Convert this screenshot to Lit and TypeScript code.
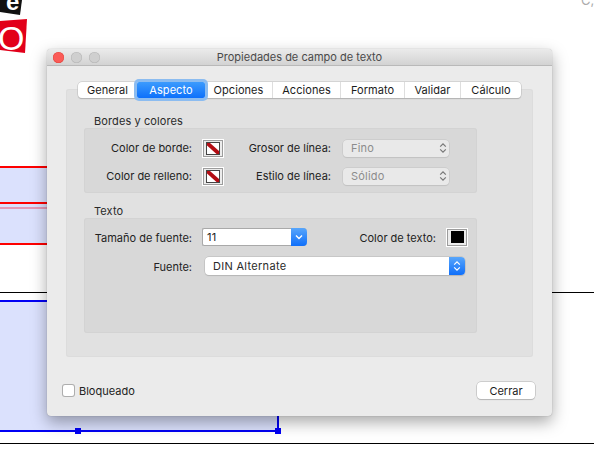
import { LitElement, html, css, svg } from "lit";
import { customElement } from "lit/decorators.js";

const updown = svg`<svg class="ud" viewBox="0 0 8 12" width="8" height="12"><path d="M1.2 4.6 4 1.8l2.8 2.8M1.2 7.4 4 10.2l2.8-2.8" fill="none" stroke="currentColor" stroke-width="1.2"/></svg>`;
const noColor = svg`<svg viewBox="0 0 14 13" width="14" height="13"><rect width="14" height="13" fill="#fff"/><path d="M1 1h3L13 9v3h-2.500L1 3.500z" fill="#b30d14"/><rect x=".5" y=".5" width="13" height="12" fill="none" stroke="#444"/></svg>`;

@customElement("app-root")
export class AppRoot extends LitElement {
  static styles = css`
    :host {
      display: block;
      position: relative;
      width: 594px;
      height: 464px;
      overflow: hidden;
      background: #fff;
      font-family: Inter, "Liberation Sans", sans-serif;
      font-size: 11px;
      color: #222;
    }
    .c { position: absolute; }
    .black { background: #000; height: 1px; }
    .red { background: #fe0000; height: 2px; left: 0; width: 60px; }
    .fill { background: #dbe1fd; }
    .blue { background: #0000f5; }
    .handle { background: #0000f5; width: 6px; height: 6px; }
    .logo { left: 0; top: 0; }
    .corner { left: 581px; top: -8px; color: #aaa; font-size: 13px; }

    .win {
      position: absolute;
      left: 47px;
      top: 49px;
      width: 505px;
      height: 367px;
      box-sizing: border-box;
      display: flex;
      flex-direction: column;
      background: #ebebeb;
      border-radius: 4px;
      box-shadow: 0 0 1px rgba(0,0,0,.35), 0 6px 16px rgba(0,0,0,.35);
    }
    .title {
      height: 16px;
      flex: none;
      display: flex;
      align-items: center;
      justify-content: center;
      position: relative;
      border-bottom: 1px solid #b9b9b9;
      border-radius: 4px 4px 0 0;
      background: linear-gradient(#ebebeb, #d3d3d3);
      color: #4a4a4a;
    }
    .lights { position: absolute; left: 6px; top: 3px; display: flex; gap: 7px; }
    .lights i { width: 11px; height: 11px; border-radius: 50%; background: #cfcfcf; box-shadow: inset 0 0 0 .5px #b5b5b5; }
    .lights i:first-child { background: #fb5b57; box-shadow: inset 0 0 0 .5px #e2463f; }

    .panel {
      margin: 23px 19px 0;
      height: 268px;
      flex: none;
      box-sizing: border-box;
      padding: 0 56px 0 18px;
      background: #e1e1e1;
      border-radius: 3px;
      box-shadow: inset 0 0 0 1px #dcdcdc;
      display: flex;
      flex-direction: column;
    }
    .tabs {
      margin: -7px 0 0 -6px;
      height: 16px;
      flex: none;
      display: flex;
      width: 443px;
      background: #fff;
      border-radius: 4px;
      box-shadow: 0 0 0 .5px #bdbdbd, 0 1px 1px rgba(0,0,0,.25);
      color: #1c1c1c;
      letter-spacing: .05px;
    }
    .tab {
      display: flex;
      align-items: center;
      justify-content: center;
      border-left: 1px solid #dedede;
      box-sizing: border-box;
    }
    .tab:first-child { border-left: 0; }
    .tab.on {
      position: relative;
      z-index: 1;
      border: 0;
      color: #fff;
      background: linear-gradient(#3c9bfd, #0d70fb);
      box-shadow: 0 0 0 3px #8cbcf0;
      border-radius: 2px;
    }
    .tab.on + .tab { border-left: 0; }

    .head { margin: 11px 0 0 10px; height: 14px; line-height: 14px; color: #2a2a2a; letter-spacing: .1px; }
    .head.first { margin-top: 16px; }
    .group { background: #d8d8d8; border-radius: 3px; box-shadow: inset 0 0 0 1px #d3d3d3; box-sizing: border-box; }
    .g1 {
      height: 65px;
      display: grid;
      grid-template-columns: 108px 32px 107px 118px;
      grid-auto-rows: 28px;
      align-items: center;
      padding-top: 6px;
    }
    .lbl { text-align: right; white-space: nowrap; color: #222; }
    .swatch {
      width: 22px;
      height: 19px;
      box-sizing: border-box;
      margin-left: 10px;
      background: #ececec;
      border: 1px solid #fff;
      box-shadow: inset 0 0 0 1px #9c9c9c;
      display: flex;
      align-items: center;
      justify-content: center;
    }
    .dis {
      margin-left: 12px;
      width: 106px;
      height: 17px;
      box-sizing: border-box;
      background: #e9e9e9;
      border-radius: 4px;
      box-shadow: 0 0 0 .5px #c2c2c2, 0 1px 1px rgba(0,0,0,.1);
      color: #8c8c8c;
      display: flex;
      align-items: center;
      justify-content: space-between;
      padding: 0 2px 0 8px;
      letter-spacing: .2px;
    }
    .dis .ud { color: #777; }
    .g2 {
      height: 115px;
      padding-top: 10px;
      display: flex;
      flex-direction: column;
      gap: 11px;
    }
    .row { display: flex; align-items: center; height: 18px; }
    .row .lbl { width: 108px; flex: none; padding-top: 2px; }
    .combo {
      margin-left: 10px;
      width: 105px;
      height: 18px;
      box-sizing: border-box;
      display: flex;
      background: #fff;
      border: 1px solid #a9a9a9;
      border-right: 0;
      border-radius: 2px 4px 4px 2px;
      align-items: stretch;
      justify-content: space-between;
      color: #222;
      letter-spacing: .3px;
    }
    .combo span { padding-left: 4px; line-height: 16px; }
    .arrow {
      width: 16px;
      margin: -1px 0;
      display: flex;
      align-items: center;
      justify-content: center;
      color: #fff;
      background: linear-gradient(#58a6fb, #0f6ffa);
      border-radius: 0 4px 4px 0;
    }
    .popup .arrow { margin: 0; }
    .spacer { flex: 1; }
    .row .lbl.wide { width: auto; }
    .row .swatch.k { margin: 0 9px 0 10px; }
    .k i { width: 13px; height: 12px; background: #000; display: block; }
    .popup {
      margin-left: 13px;
      width: 260px;
      height: 18px;
      box-sizing: border-box;
      background: #fff;
      border-radius: 4px;
      box-shadow: 0 0 0 .5px #b5b5b5, 0 1px 1px rgba(0,0,0,.15);
      display: flex;
      justify-content: space-between;
      align-items: stretch;
      color: #2a2a2a;
      letter-spacing: .3px;
    }
    .popup span { padding-left: 8px; line-height: 18px; }

    .foot {
      flex: 1;
      display: flex;
      align-items: center;
      justify-content: space-between;
      padding: 8px 17px 0 16px;
    }
    .check { display: flex; align-items: center; gap: 5px; }
    .check i {
      width: 11px;
      height: 11px;
      display: block;
      background: #fff;
      border-radius: 2px;
      box-shadow: 0 0 0 1px #aeaeae;
    }
    .btn {
      width: 58px;
      height: 17px;
      box-sizing: border-box;
      display: flex;
      align-items: center;
      justify-content: center;
      background: #fff;
      border-radius: 4px;
      box-shadow: 0 0 0 .5px #b0b0b0, 0 1px 1px rgba(0,0,0,.2);
      color: #1c1c1c;
    }
  `;

  render() {
    const tabs: [string, number, boolean?][] = [
      ["General", 59],
      ["Aspecto", 68, true],
      ["Opciones", 67],
      ["Acciones", 68],
      ["Formato", 64],
      ["Validar", 56],
      ["Cálculo", 61],
    ];
    return html`
      <svg class="c logo" width="30" height="56" viewBox="0 0 30 56">
        <polygon points="0,0 22,0 20,15 0,12" fill="#111"/>
        <text x="6" y="10" fill="#fff" font-size="24" font-weight="700" font-family="Liberation Sans">e</text>
        <polygon points="0,21 27,19 25,53 0,50" fill="#e2001a"/>
        <text x="-2" y="49.500" fill="#fff" font-size="34" font-family="Liberation Sans">O</text>
      </svg>
      <div class="c corner">C,</div>

      <div class="c red" style="top:166px"></div>
      <div class="c fill" style="left:0;top:168px;width:60px;height:75px"></div>
      <div class="c red" style="top:202px"></div>
      <div class="c" style="left:0;top:207px;width:60px;height:2px;background:#e29ab8"></div>
      <div class="c red" style="top:243px"></div>

      <div class="c black" style="left:0;top:292px;width:594px"></div>
      <div class="c fill" style="left:0;top:301px;width:278px;height:130px"></div>
      <div class="c blue" style="left:0;top:300px;width:60px;height:2px"></div>
      <div class="c blue" style="left:0;top:430px;width:278px;height:2px"></div>
      <div class="c blue" style="left:277px;top:400px;width:2px;height:31px"></div>
      <div class="c handle" style="left:75px;top:428px"></div>
      <div class="c handle" style="left:275px;top:428px"></div>
      <div class="c black" style="left:0;top:443px;width:594px"></div>

      <div class="win">
        <div class="title">
          <div class="lights"><i></i><i></i><i></i></div>
          Propiedades de campo de texto
        </div>
        <div class="panel">
          <div class="tabs">
            ${tabs.map(
              ([t, w, on]) =>
                html`<div class="tab ${on ? "on" : ""}" style="width:${w}px">${t}</div>`
            )}
          </div>
          <div class="head first">Bordes y colores</div>
          <div class="group g1">
            <div class="lbl">Color de borde:</div>
            <div class="swatch">${noColor}</div>
            <div class="lbl">Grosor de línea:</div>
            <div class="dis">Fino ${updown}</div>
            <div class="lbl">Color de relleno:</div>
            <div class="swatch">${noColor}</div>
            <div class="lbl">Estilo de línea:</div>
            <div class="dis">Sólido ${updown}</div>
          </div>
          <div class="head">Texto</div>
          <div class="group g2">
            <div class="row">
              <div class="lbl">Tamaño de fuente:</div>
              <div class="combo">
                <span>11</span>
                <div class="arrow">
                  <svg width="8" height="6" viewBox="0 0 8 6"><path d="M1 1.500l3 3 3-3" fill="none" stroke="#fff" stroke-width="1.400"/></svg>
                </div>
              </div>
              <div class="spacer"></div>
              <div class="lbl wide">Color de texto:</div>
              <div class="swatch k"><i></i></div>
            </div>
            <div class="row">
              <div class="lbl">Fuente:</div>
              <div class="popup">
                <span>DIN Alternate</span>
                <div class="arrow">${updown}</div>
              </div>
            </div>
          </div>
        </div>
        <div class="foot">
          <div class="check"><i></i>Bloqueado</div>
          <div class="btn">Cerrar</div>
        </div>
      </div>
    `;
  }
}
